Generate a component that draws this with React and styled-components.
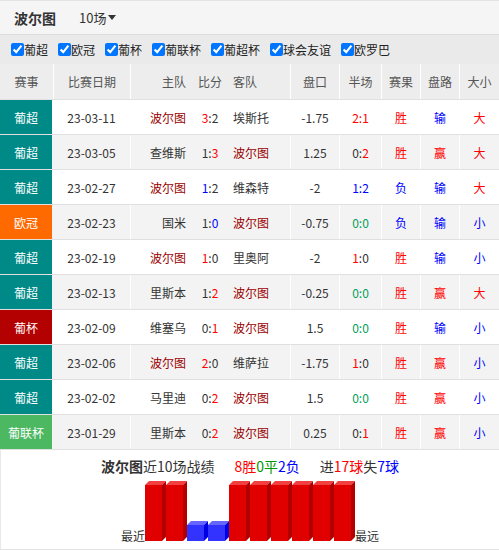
import React from "react";
import styled, { createGlobalStyle } from "styled-components";

const GlobalStyle = createGlobalStyle`
  html, body { margin: 0; padding: 0; background: #fff; }
  body { font-family: "Noto Sans CJK SC", "Noto Sans", sans-serif; color: #333; }
`;

const Wrap = styled.div`
  width: 499px;
  height: 550px;
  overflow: hidden;
`;

const TitleBar = styled.div`
  height: 35px;
  box-sizing: border-box;
  border-top: 1px solid #e3e3e3;
  border-bottom: 1px solid #dcdcdc;
  background: #f5f5f5;
  display: flex;
  align-items: center;
  padding-left: 14px;
  gap: 23px;
`;

const Title = styled.div`
  font-size: 14px;
  font-weight: bold;
  color: #333;
`;

const Count = styled.div`
  font-size: 13px;
  color: #333;
  display: flex;
  align-items: center;
  gap: 2px;
`;

const Caret = styled.span`
  width: 0;
  height: 0;
  border-left: 4px solid transparent;
  border-right: 4px solid transparent;
  border-top: 5px solid #333;
`;

const FilterBar = styled.div`
  height: 29px;
  background: #eaeaea;
  display: flex;
  align-items: center;
  padding-left: 11px;
  gap: 10px;
`;

const Filter = styled.label`
  display: flex;
  align-items: center;
  font-size: 12px;
  color: #222;
  input {
    margin: 0;
    width: 13px;
    height: 13px;
    accent-color: #0075ff;
  }
`;

const Row = styled.div`
  display: grid;
  grid-template-columns: 53px 77px 62px 36px 62px 49px 42px 39px 39px 40px;
  height: 35px;
  box-sizing: border-box;
  border-top: ${p => (p.$head ? "none" : "1px solid #e0e0e0")};
  background: ${p => (p.$head ? "#ededed" : p.$alt ? "#f3f3f3" : "#fff")};
  font-size: 12px;
`;

const Cell = styled.div`
  display: flex;
  align-items: center;
  justify-content: ${p => p.$align || "center"};
  box-sizing: border-box;
  border-left: ${p => (p.$sep ? "1px solid #fff" : "none")};
  padding: ${p => p.$pad || "0"};
  color: ${p => p.$color || (p.$head ? "#555" : "#333")};
  white-space: nowrap;
`;

const League = styled.div`
  display: flex;
  align-items: center;
  justify-content: center;
  background: ${p => p.$bg};
  color: #fff;
  font-size: 12px;
  margin-right: 1px;
`;

const Hi = styled.span`
  color: ${p => p.$c};
`;

const Summary = styled.div`
  height: 101px;
  box-sizing: border-box;
  border-top: 1px solid #e0e0e0;
  border-bottom: 1px solid #e3e3e3;
  border-left: 1px solid #e8e8e8;
  display: flex;
  flex-direction: column;
  align-items: center;
`;

const SumLine = styled.div`
  display: flex;
  gap: 20px;
  font-size: 14px;
  margin-top: 6px;
  height: 20px;
  align-items: center;
`;

const ChartRow = styled.div`
  display: flex;
  align-items: flex-end;
  margin-top: 3px;
`;

const EdgeLabel = styled.span`
  font-size: 12px;
  color: #333;
  line-height: 14px;
  margin-bottom: 0px;
`;

const leagueColors = {
  葡超: "#008a87",
  欧冠: "#ff6a00",
  葡杯: "#b30000",
  葡联杯: "#4cb862",
};

const R = "#ff0000";
const B = "#0000ff";
const G = "#00a05a";
const PORTO = "#990000";

// score parts: [left, right, leftColor, rightColor]
const matches = [
  { lg: "葡超", d: "23-03-11", h: "波尔图", s: ["3", "2", R, null], a: "埃斯托", pk: "-1.75", hf: ["2", "1", R, R], res: "胜", pl: "输", ou: "大" },
  { lg: "葡超", d: "23-03-05", h: "查维斯", s: ["1", "3", null, R], a: "波尔图", pk: "1.25", hf: ["0", "2", null, R], res: "胜", pl: "赢", ou: "大" },
  { lg: "葡超", d: "23-02-27", h: "波尔图", s: ["1", "2", B, null], a: "维森特", pk: "-2", hf: ["1", "2", B, B], res: "负", pl: "输", ou: "大" },
  { lg: "欧冠", d: "23-02-23", h: "国米", s: ["1", "0", null, B], a: "波尔图", pk: "-0.75", hf: ["0", "0", G, G], res: "负", pl: "输", ou: "小" },
  { lg: "葡超", d: "23-02-19", h: "波尔图", s: ["1", "0", R, null], a: "里奥阿", pk: "-2", hf: ["1", "0", R, null], res: "胜", pl: "输", ou: "小" },
  { lg: "葡超", d: "23-02-13", h: "里斯本", s: ["1", "2", null, R], a: "波尔图", pk: "-0.25", hf: ["0", "0", G, G], res: "胜", pl: "赢", ou: "大" },
  { lg: "葡杯", d: "23-02-09", h: "维塞乌", s: ["0", "1", null, R], a: "波尔图", pk: "1.5", hf: ["0", "0", G, G], res: "胜", pl: "输", ou: "小" },
  { lg: "葡超", d: "23-02-06", h: "波尔图", s: ["2", "0", R, null], a: "维萨拉", pk: "-1.75", hf: ["1", "0", R, null], res: "胜", pl: "赢", ou: "小" },
  { lg: "葡超", d: "23-02-02", h: "马里迪", s: ["0", "2", null, R], a: "波尔图", pk: "1.5", hf: ["0", "0", G, G], res: "胜", pl: "赢", ou: "小" },
  { lg: "葡联杯", d: "23-01-29", h: "里斯本", s: ["0", "2", null, R], a: "波尔图", pk: "0.25", hf: ["0", "1", null, R], res: "胜", pl: "赢", ou: "小" },
];

const filters = ["葡超", "欧冠", "葡杯", "葡联杯", "葡超杯", "球会友谊", "欧罗巴"];

const Score = ({ p }) => {
  const [l, r, lc, rc] = p;
  return (
    <span>
      <Hi $c={lc || "#333"}>{l}</Hi>
      <Hi $c={lc && lc === rc ? lc : "#333"}>:</Hi>
      <Hi $c={rc || "#333"}>{r}</Hi>
    </span>
  );
};

const teamColor = name => (name === "波尔图" ? PORTO : "#333");
const wl = v => (v === "胜" || v === "赢" || v === "大" ? R : B);

const bars = ["w", "w", "l", "l", "w", "w", "w", "w", "w", "w"];

const Chart = () => {
  const step = 21;
  const fw = 17;
  const dx = 4;
  const base = 62;
  return (
    <svg width={10 * step} height={64} style={{ display: "block" }}>
      {bars.map((b, i) => {
        const x = i * step;
        const h = b === "w" ? 56 : 16;
        const top = base - h;
        const front = b === "w" ? "#e00000" : "#3333ff";
        const side = b === "w" ? "#b20000" : "#0000e6";
        const lid = b === "w" ? "#f24040" : "#6666ff";
        return (
          <g key={i}>
            <polygon points={`${x},${top} ${x + dx},${top - dx} ${x + fw + dx},${top - dx} ${x + fw},${top}`} fill={lid} />
            <polygon points={`${x + fw},${top} ${x + fw + dx},${top - dx} ${x + fw + dx},${base - dx} ${x + fw},${base}`} fill={side} />
            <rect x={x} y={top} width={fw} height={h} fill={front} />
          </g>
        );
      })}
    </svg>
  );
};

export default function App() {
  return (
    <Wrap>
      <GlobalStyle />
      <TitleBar>
        <Title>波尔图</Title>
        <Count>
          10场<Caret />
        </Count>
      </TitleBar>
      <FilterBar>
        {filters.map(f => (
          <Filter key={f}>
            <input type="checkbox" defaultChecked />
            {f}
          </Filter>
        ))}
      </FilterBar>
      <Row $head>
        <Cell $head>赛事</Cell>
        <Cell $head $sep>比赛日期</Cell>
        <Cell $head $sep $align="flex-end" $pad="0 6px 0 0">主队</Cell>
        <Cell $head>比分</Cell>
        <Cell $head $align="flex-start" $pad="0 0 0 5px">客队</Cell>
        <Cell $head $sep>盘口</Cell>
        <Cell $head $sep>半场</Cell>
        <Cell $head $sep>赛果</Cell>
        <Cell $head $sep>盘路</Cell>
        <Cell $head $sep>大小</Cell>
      </Row>
      {matches.map((m, i) => (
        <Row key={m.d} $alt={i % 2 === 1}>
          <League $bg={leagueColors[m.lg]}>{m.lg}</League>
          <Cell>{m.d}</Cell>
          <Cell $sep $align="flex-end" $pad="0 6px 0 0" $color={teamColor(m.h)}>{m.h}</Cell>
          <Cell><Score p={m.s} /></Cell>
          <Cell $align="flex-start" $pad="0 0 0 5px" $color={teamColor(m.a)}>{m.a}</Cell>
          <Cell $sep>{m.pk}</Cell>
          <Cell $sep><Score p={m.hf} /></Cell>
          <Cell $sep $color={wl(m.res)}>{m.res}</Cell>
          <Cell $sep $color={wl(m.pl)}>{m.pl}</Cell>
          <Cell $sep $color={wl(m.ou)}>{m.ou}</Cell>
        </Row>
      ))}
      <Summary>
        <SumLine>
          <span>
            <b>波尔图</b>近10场战绩
          </span>
          <span>
            <Hi $c={R}>8胜</Hi>
            <Hi $c="#009900">0平</Hi>
            <Hi $c={B}>2负</Hi>
          </span>
          <span>
            进<Hi $c={R}>17球</Hi>失<Hi $c={B}>7球</Hi>
          </span>
        </SumLine>
        <ChartRow>
          <EdgeLabel>最近</EdgeLabel>
          <Chart />
          <EdgeLabel>最远</EdgeLabel>
        </ChartRow>
      </Summary>
    </Wrap>
  );
}
